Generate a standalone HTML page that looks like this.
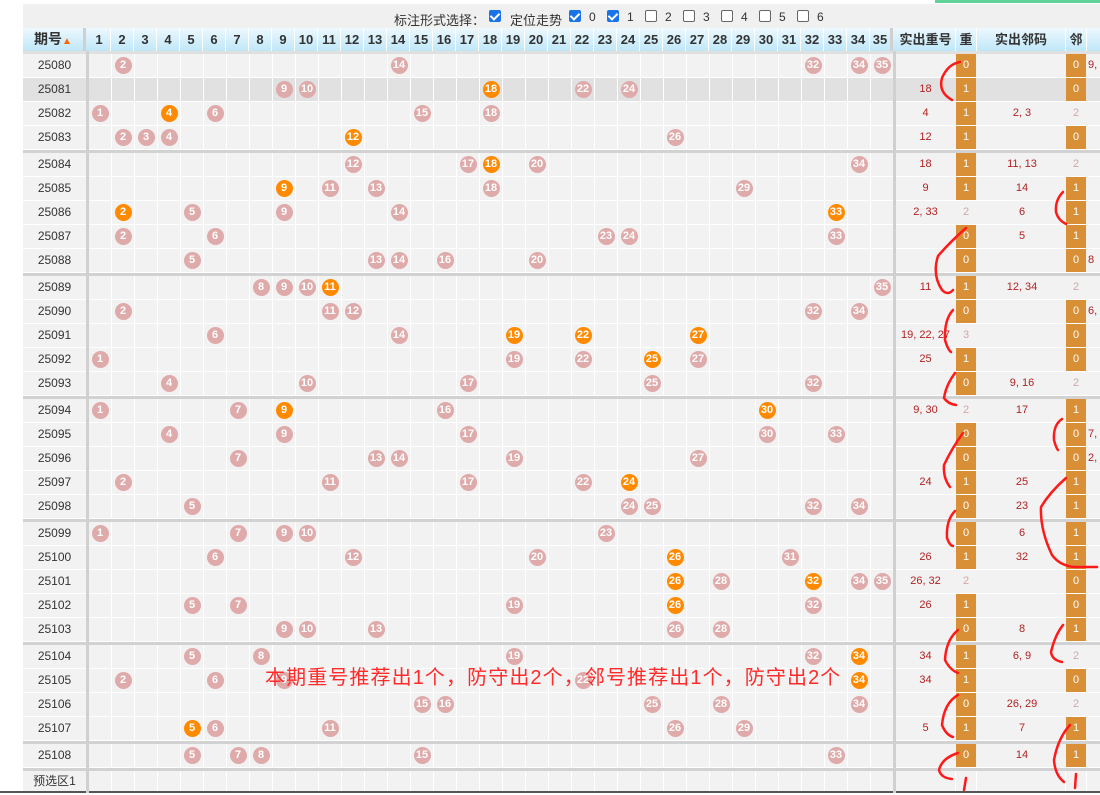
<!DOCTYPE html><html><head><meta charset="utf-8"><style>
*{margin:0;padding:0;box-sizing:border-box}
body{width:1100px;height:793px;overflow:hidden;background:#fff;position:relative;font-family:"Liberation Sans","Noto Sans CJK SC",sans-serif;font-size:12px;color:#333}
.abs{position:absolute}
.topbar{left:23px;top:4px;width:1077px;height:24px;background:#f0f0f0}
.hd{left:23px;top:28px;width:1077px;height:23px;background:linear-gradient(#edf8fe,#bfe7f8)}
.hc{position:absolute;top:0;height:23px;line-height:23px;text-align:center;font-weight:bold;color:#333;font-size:13px;border-right:1px solid #fff}
.r{position:absolute;left:23px;width:1077px;height:24px;background:#f2f2f2;border-bottom:1px solid #fff}
.r.h{background:#e1e1e1}
.g{position:absolute;left:65px;top:0;width:806px;height:23px;background:repeating-linear-gradient(to right,#fff 0 1px,transparent 1px 23px)}
.pd{position:absolute;left:0;width:63px;top:0;height:23px;line-height:23px;text-align:center;color:#333;font-size:12px}
.r i{position:absolute;top:3px;width:17px;height:17px;border-radius:50%;background:#dfaaaa;color:#fff;font-style:normal;font-weight:bold;font-size:11px;line-height:17px;text-align:center;margin-left:-23.5px}
.r i.o{background:#ff8a00}
.c{position:absolute;top:0;height:23px;line-height:23px;text-align:center;color:#b22222;font-size:11px}
.c1{left:873px;width:59px}
.c2{left:933px;width:20px;color:#fff;background:#d98f35}
.c3{left:955px;width:88px}
.c4{left:1043px;width:20px;color:#fff;background:#d98f35}
.c5{left:1065px;width:30px;text-align:left}
.gr{background:none;color:#d0a8a8}
.vl{position:absolute;top:0;width:1px;height:24px;background:#fff}
.sep{position:absolute;left:23px;width:1077px;height:3px;background:#d2d2d2}
.cb{position:absolute;top:10px;width:12px;height:12px;border-radius:2px}
.cb.on{background:#1a73e8}
.cb.on:after{content:"";position:absolute;left:3px;top:1px;width:4px;height:7px;border:solid #fff;border-width:0 2px 2px 0;transform:rotate(45deg)}
.cb.off{border:1px solid #666;background:#fff}
.tl{position:absolute;top:10px;font-size:12px;color:#333}
</style></head><body>
<div class="abs" style="left:935px;top:0;width:165px;height:3px;background:#5fd39a"></div>
<div class="abs topbar"></div>
<div class="tl" style="left:394px;font-size:13px">标注形式选择：</div>
<div class="cb on" style="left:489px"></div><div class="tl" style="left:510px;font-size:13px">定位走势</div>
<div class="cb on" style="left:569px"></div><div class="tl" style="left:589px">0</div>
<div class="cb on" style="left:607px"></div><div class="tl" style="left:627px">1</div>
<div class="cb off" style="left:645px"></div><div class="tl" style="left:665px">2</div>
<div class="cb off" style="left:683px"></div><div class="tl" style="left:703px">3</div>
<div class="cb off" style="left:721px"></div><div class="tl" style="left:741px">4</div>
<div class="cb off" style="left:759px"></div><div class="tl" style="left:779px">5</div>
<div class="cb off" style="left:797px"></div><div class="tl" style="left:817px">6</div>

<div class="abs hd">
<div class="hc" style="left:0;width:63px;border-right:3px solid #d0d0d0;font-size:14px">期号<span style="color:#f60;font-size:10px">▲</span></div>
<div class="hc" style="left:65px;width:23px">1</div><div class="hc" style="left:88px;width:23px">2</div><div class="hc" style="left:111px;width:23px">3</div><div class="hc" style="left:134px;width:23px">4</div><div class="hc" style="left:157px;width:23px">5</div><div class="hc" style="left:180px;width:23px">6</div><div class="hc" style="left:203px;width:23px">7</div><div class="hc" style="left:226px;width:23px">8</div><div class="hc" style="left:249px;width:23px">9</div><div class="hc" style="left:272px;width:23px">10</div><div class="hc" style="left:295px;width:23px">11</div><div class="hc" style="left:318px;width:23px">12</div><div class="hc" style="left:341px;width:23px">13</div><div class="hc" style="left:364px;width:23px">14</div><div class="hc" style="left:387px;width:23px">15</div><div class="hc" style="left:410px;width:23px">16</div><div class="hc" style="left:433px;width:23px">17</div><div class="hc" style="left:456px;width:23px">18</div><div class="hc" style="left:479px;width:23px">19</div><div class="hc" style="left:502px;width:23px">20</div><div class="hc" style="left:525px;width:23px">21</div><div class="hc" style="left:548px;width:23px">22</div><div class="hc" style="left:571px;width:23px">23</div><div class="hc" style="left:594px;width:23px">24</div><div class="hc" style="left:617px;width:23px">25</div><div class="hc" style="left:640px;width:23px">26</div><div class="hc" style="left:663px;width:23px">27</div><div class="hc" style="left:686px;width:23px">28</div><div class="hc" style="left:709px;width:23px">29</div><div class="hc" style="left:732px;width:23px">30</div><div class="hc" style="left:755px;width:23px">31</div><div class="hc" style="left:778px;width:23px">32</div><div class="hc" style="left:801px;width:23px">33</div><div class="hc" style="left:824px;width:23px">34</div><div class="hc" style="left:847px;width:23px;border-right:3px solid #d0d0d0">35</div>
<div class="hc" style="left:873px;width:60px">实出重号</div><div class="hc" style="left:933px;width:21px">重</div><div class="hc" style="left:954px;width:89px">实出邻码</div><div class="hc" style="left:1043px;width:21px">邻</div>
</div>
<div class="abs" style="left:23px;top:51px;width:1077px;height:3px;background:#e0e0e0"></div>
<div class="abs" style="left:86px;top:51px;width:3px;height:742px;background:#d0d0d0;z-index:2"></div>
<div class="abs" style="left:893px;top:51px;width:3px;height:742px;background:#d0d0d0;z-index:2"></div>

<div class="r" style="top:54px"><div class="g"></div><div class="pd">25080</div><i style="left:115px">2</i><i style="left:391px">14</i><i style="left:805px">32</i><i style="left:851px">34</i><i style="left:874px">35</i><div class="c c1"></div><div class="c c2">0</div><div class="c c3"></div><div class="c c4">0</div><div class="c c5">9,</div></div>
<div class="r h" style="top:78px"><div class="g"></div><div class="pd">25081</div><i style="left:276px">9</i><i style="left:299px">10</i><i class="o" style="left:483px">18</i><i style="left:575px">22</i><i style="left:621px">24</i><div class="c c1">18</div><div class="c c2">1</div><div class="c c3"></div><div class="c c4">0</div></div>
<div class="r" style="top:102px"><div class="g"></div><div class="pd">25082</div><i style="left:92px">1</i><i class="o" style="left:161px">4</i><i style="left:207px">6</i><i style="left:414px">15</i><i style="left:483px">18</i><div class="c c1">4</div><div class="c c2">1</div><div class="c c3">2, 3</div><div class="c c4 gr">2</div></div>
<div class="r" style="top:126px"><div class="g"></div><div class="pd">25083</div><i style="left:115px">2</i><i style="left:138px">3</i><i style="left:161px">4</i><i class="o" style="left:345px">12</i><i style="left:667px">26</i><div class="c c1">12</div><div class="c c2">1</div><div class="c c3"></div><div class="c c4">0</div></div>
<div class="sep" style="top:150px"></div>
<div class="r" style="top:153px"><div class="g"></div><div class="pd">25084</div><i style="left:345px">12</i><i style="left:460px">17</i><i class="o" style="left:483px">18</i><i style="left:529px">20</i><i style="left:851px">34</i><div class="c c1">18</div><div class="c c2">1</div><div class="c c3">11, 13</div><div class="c c4 gr">2</div></div>
<div class="r" style="top:177px"><div class="g"></div><div class="pd">25085</div><i class="o" style="left:276px">9</i><i style="left:322px">11</i><i style="left:368px">13</i><i style="left:483px">18</i><i style="left:736px">29</i><div class="c c1">9</div><div class="c c2">1</div><div class="c c3">14</div><div class="c c4">1</div></div>
<div class="r" style="top:201px"><div class="g"></div><div class="pd">25086</div><i class="o" style="left:115px">2</i><i style="left:184px">5</i><i style="left:276px">9</i><i style="left:391px">14</i><i class="o" style="left:828px">33</i><div class="c c1">2, 33</div><div class="c c2 gr">2</div><div class="c c3">6</div><div class="c c4">1</div></div>
<div class="r" style="top:225px"><div class="g"></div><div class="pd">25087</div><i style="left:115px">2</i><i style="left:207px">6</i><i style="left:598px">23</i><i style="left:621px">24</i><i style="left:828px">33</i><div class="c c1"></div><div class="c c2">0</div><div class="c c3">5</div><div class="c c4">1</div></div>
<div class="r" style="top:249px"><div class="g"></div><div class="pd">25088</div><i style="left:184px">5</i><i style="left:368px">13</i><i style="left:391px">14</i><i style="left:437px">16</i><i style="left:529px">20</i><div class="c c1"></div><div class="c c2">0</div><div class="c c3"></div><div class="c c4">0</div><div class="c c5">8</div></div>
<div class="sep" style="top:273px"></div>
<div class="r" style="top:276px"><div class="g"></div><div class="pd">25089</div><i style="left:253px">8</i><i style="left:276px">9</i><i style="left:299px">10</i><i class="o" style="left:322px">11</i><i style="left:874px">35</i><div class="c c1">11</div><div class="c c2">1</div><div class="c c3">12, 34</div><div class="c c4 gr">2</div></div>
<div class="r" style="top:300px"><div class="g"></div><div class="pd">25090</div><i style="left:115px">2</i><i style="left:322px">11</i><i style="left:345px">12</i><i style="left:805px">32</i><i style="left:851px">34</i><div class="c c1"></div><div class="c c2">0</div><div class="c c3"></div><div class="c c4">0</div><div class="c c5">6,</div></div>
<div class="r" style="top:324px"><div class="g"></div><div class="pd">25091</div><i style="left:207px">6</i><i style="left:391px">14</i><i class="o" style="left:506px">19</i><i class="o" style="left:575px">22</i><i class="o" style="left:690px">27</i><div class="c c1">19, 22, 27</div><div class="c c2 gr">3</div><div class="c c3"></div><div class="c c4">0</div></div>
<div class="r" style="top:348px"><div class="g"></div><div class="pd">25092</div><i style="left:92px">1</i><i style="left:506px">19</i><i style="left:575px">22</i><i class="o" style="left:644px">25</i><i style="left:690px">27</i><div class="c c1">25</div><div class="c c2">1</div><div class="c c3"></div><div class="c c4">0</div></div>
<div class="r" style="top:372px"><div class="g"></div><div class="pd">25093</div><i style="left:161px">4</i><i style="left:299px">10</i><i style="left:460px">17</i><i style="left:644px">25</i><i style="left:805px">32</i><div class="c c1"></div><div class="c c2">0</div><div class="c c3">9, 16</div><div class="c c4 gr">2</div></div>
<div class="sep" style="top:396px"></div>
<div class="r" style="top:399px"><div class="g"></div><div class="pd">25094</div><i style="left:92px">1</i><i style="left:230px">7</i><i class="o" style="left:276px">9</i><i style="left:437px">16</i><i class="o" style="left:759px">30</i><div class="c c1">9, 30</div><div class="c c2 gr">2</div><div class="c c3">17</div><div class="c c4">1</div></div>
<div class="r" style="top:423px"><div class="g"></div><div class="pd">25095</div><i style="left:161px">4</i><i style="left:276px">9</i><i style="left:460px">17</i><i style="left:759px">30</i><i style="left:828px">33</i><div class="c c1"></div><div class="c c2">0</div><div class="c c3"></div><div class="c c4">0</div><div class="c c5">7,</div></div>
<div class="r" style="top:447px"><div class="g"></div><div class="pd">25096</div><i style="left:230px">7</i><i style="left:368px">13</i><i style="left:391px">14</i><i style="left:506px">19</i><i style="left:690px">27</i><div class="c c1"></div><div class="c c2">0</div><div class="c c3"></div><div class="c c4">0</div><div class="c c5">2,</div></div>
<div class="r" style="top:471px"><div class="g"></div><div class="pd">25097</div><i style="left:115px">2</i><i style="left:322px">11</i><i style="left:460px">17</i><i style="left:575px">22</i><i class="o" style="left:621px">24</i><div class="c c1">24</div><div class="c c2">1</div><div class="c c3">25</div><div class="c c4">1</div></div>
<div class="r" style="top:495px"><div class="g"></div><div class="pd">25098</div><i style="left:184px">5</i><i style="left:621px">24</i><i style="left:644px">25</i><i style="left:805px">32</i><i style="left:851px">34</i><div class="c c1"></div><div class="c c2">0</div><div class="c c3">23</div><div class="c c4">1</div></div>
<div class="sep" style="top:519px"></div>
<div class="r" style="top:522px"><div class="g"></div><div class="pd">25099</div><i style="left:92px">1</i><i style="left:230px">7</i><i style="left:276px">9</i><i style="left:299px">10</i><i style="left:598px">23</i><div class="c c1"></div><div class="c c2">0</div><div class="c c3">6</div><div class="c c4">1</div></div>
<div class="r" style="top:546px"><div class="g"></div><div class="pd">25100</div><i style="left:207px">6</i><i style="left:345px">12</i><i style="left:529px">20</i><i class="o" style="left:667px">26</i><i style="left:782px">31</i><div class="c c1">26</div><div class="c c2">1</div><div class="c c3">32</div><div class="c c4">1</div></div>
<div class="r" style="top:570px"><div class="g"></div><div class="pd">25101</div><i class="o" style="left:667px">26</i><i style="left:713px">28</i><i class="o" style="left:805px">32</i><i style="left:851px">34</i><i style="left:874px">35</i><div class="c c1">26, 32</div><div class="c c2 gr">2</div><div class="c c3"></div><div class="c c4">0</div></div>
<div class="r" style="top:594px"><div class="g"></div><div class="pd">25102</div><i style="left:184px">5</i><i style="left:230px">7</i><i style="left:506px">19</i><i class="o" style="left:667px">26</i><i style="left:805px">32</i><div class="c c1">26</div><div class="c c2">1</div><div class="c c3"></div><div class="c c4">0</div></div>
<div class="r" style="top:618px"><div class="g"></div><div class="pd">25103</div><i style="left:276px">9</i><i style="left:299px">10</i><i style="left:368px">13</i><i style="left:667px">26</i><i style="left:713px">28</i><div class="c c1"></div><div class="c c2">0</div><div class="c c3">8</div><div class="c c4">1</div></div>
<div class="sep" style="top:642px"></div>
<div class="r" style="top:645px"><div class="g"></div><div class="pd">25104</div><i style="left:184px">5</i><i style="left:253px">8</i><i style="left:506px">19</i><i style="left:805px">32</i><i class="o" style="left:851px">34</i><div class="c c1">34</div><div class="c c2">1</div><div class="c c3">6, 9</div><div class="c c4 gr">2</div></div>
<div class="r" style="top:669px"><div class="g"></div><div class="pd">25105</div><i style="left:115px">2</i><i style="left:207px">6</i><i style="left:276px">9</i><i style="left:575px">22</i><i class="o" style="left:851px">34</i><div class="c c1">34</div><div class="c c2">1</div><div class="c c3"></div><div class="c c4">0</div></div>
<div class="r" style="top:693px"><div class="g"></div><div class="pd">25106</div><i style="left:414px">15</i><i style="left:437px">16</i><i style="left:644px">25</i><i style="left:713px">28</i><i style="left:851px">34</i><div class="c c1"></div><div class="c c2">0</div><div class="c c3">26, 29</div><div class="c c4 gr">2</div></div>
<div class="r" style="top:717px"><div class="g"></div><div class="pd">25107</div><i class="o" style="left:184px">5</i><i style="left:207px">6</i><i style="left:322px">11</i><i style="left:667px">26</i><i style="left:736px">29</i><div class="c c1">5</div><div class="c c2">1</div><div class="c c3">7</div><div class="c c4">1</div></div>
<div class="sep" style="top:741px"></div>
<div class="r" style="top:744px"><div class="g"></div><div class="pd">25108</div><i style="left:184px">5</i><i style="left:230px">7</i><i style="left:253px">8</i><i style="left:414px">15</i><i style="left:828px">33</i><div class="c c1"></div><div class="c c2">0</div><div class="c c3">14</div><div class="c c4">1</div></div>
<div class="sep" style="top:768px"></div>
<div class="r" style="top:771px;height:21px"><div class="g" style="height:21px"></div><div class="pd" style="height:21px;line-height:21px">预选区1</div><div class="vl" style="left:932px"></div><div class="vl" style="left:953px"></div><div class="vl" style="left:1042px"></div><div class="vl" style="left:1063px"></div></div>
<div class="abs" style="left:0;top:791px;width:1100px;height:2px;background:#555"></div>

<div class="abs" style="left:265px;top:661px;font-size:20px;color:#ff2a2a;white-space:nowrap;font-family:'Liberation Sans','Noto Sans CJK SC',sans-serif;letter-spacing:1.1px;z-index:5">本期重号推荐出1个，防守出2个，邻号推荐出1个，防守出2个</div>

<svg class="abs" style="left:0;top:0;z-index:6" width="1100" height="793" fill="none" stroke="#ff1a1a" stroke-width="2.5" stroke-linecap="round">
<path d="M960 62 Q948 64 942 78 Q938 92 952 100"/>
<path d="M1063 192 Q1055 200 1056 212 Q1058 220 1066 224"/>
<path d="M966 228 Q950 242 938 256 Q932 275 942 290 Q948 296 953 290"/>
<path d="M953 310 Q944 320 945 340 Q948 350 951 352"/>
<path d="M955 373 Q946 385 944 398 Q948 404 956 405"/>
<path d="M1062 419 Q1053 425 1054 440 Q1056 448 1058 450"/>
<path d="M963 433 Q952 448 944 465 Q943 478 950 487"/>
<path d="M955 511 Q946 520 947 538 Q950 546 953 546"/>
<path d="M1066 478 Q1050 492 1041 507 Q1040 530 1052 555 Q1060 566 1075 567 L1097 567"/>
<path d="M958 630 Q946 640 945 660 Q950 670 958 673"/>
<path d="M1063 625 Q1055 635 1051 652 Q1052 660 1062 662"/>
<path d="M958 695 Q944 703 942 725 Q946 735 953 737"/>
<path d="M1070 725 Q1058 738 1054 760 Q1055 775 1064 782"/>
<path d="M958 753 Q942 758 939 770 Q941 778 952 779"/>
<path d="M966 778 L964 790"/>
<path d="M1076 774 L1075 788"/>
</svg>
</body></html>
